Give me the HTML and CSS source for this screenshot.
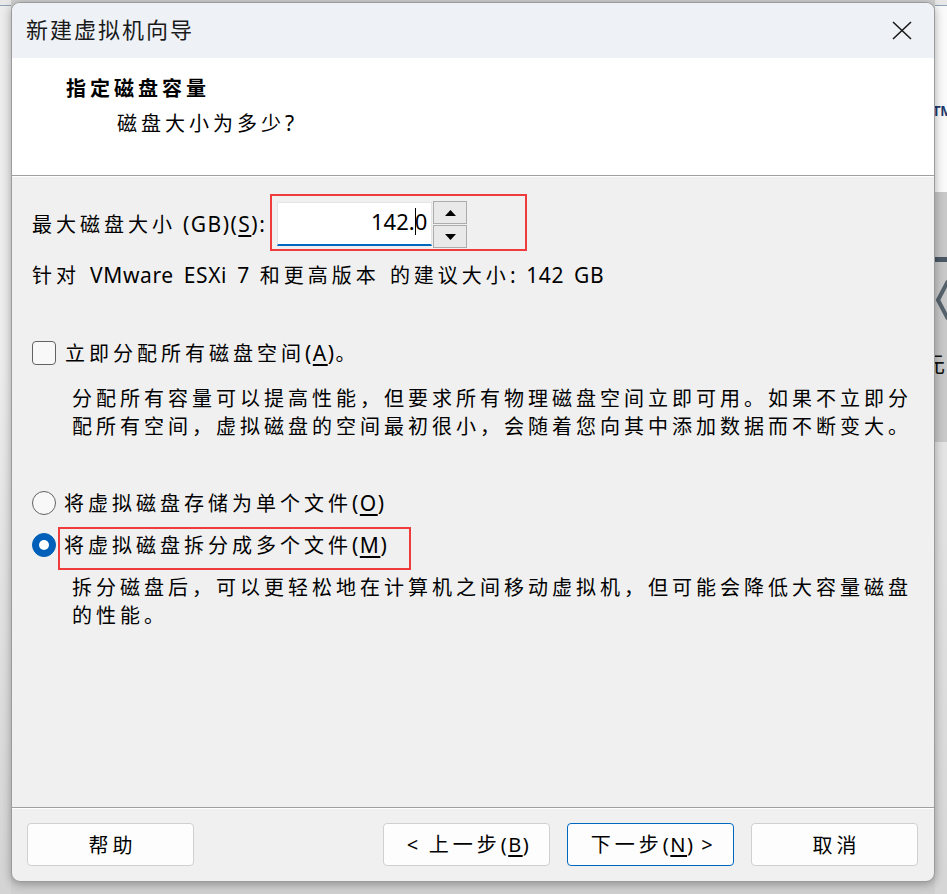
FILE: index.html
```html
<!DOCTYPE html>
<html lang="zh-CN">
<head>
<meta charset="utf-8">
<title>新建虚拟机向导</title>
<link rel="stylesheet" href="styles.css">
</head>
<body>
<div class="desk-left"></div>
<div class="dialog">
  <div class="titlebar">
    <span class="title">新建虚拟机向导</span>
    <svg class="close" viewBox="0 0 20 19" width="20" height="19"><path d="M1 1L19 18M19 1L1 18" stroke="#1b1b1b" stroke-width="1.6" fill="none"/></svg>
  </div>
  <div class="header">
    <div class="h-title">指定磁盘容量</div>
    <div class="h-sub">磁盘大小为多少<span class="en">?</span></div>
  </div>
  <div class="content">
    <div class="size-row">
      <span class="size-label">最大磁盘大小<span class="en wide"> (GB)(<u>S</u>):</span></span>
      <div class="mark-box">
        <div class="field">142.<span class="caret"></span>0</div>
        <div class="spin">
          <div class="spin-btn"><svg viewBox="0 0 11 6" width="11" height="6"><polygon points="0,6 5.5,0 11,6" fill="#000"/></svg></div>
          <div class="spin-btn"><svg viewBox="0 0 11 6" width="11" height="6"><polygon points="0,0 11,0 5.5,6" fill="#000"/></svg></div>
        </div>
      </div>
    </div>
    <p class="hint">针对<span class="en"> VMware ESXi 7 </span>和更高版本<span class="en"> </span>的建议大小<span class="en">: 142 GB</span></p>
    <div class="opt opt-check"><span class="checkbox"></span><span class="opt-label">立即分配所有磁盘空间<span class="en wide">(<u>A</u>)</span>。</span></div>
    <p class="desc">分配所有容量可以提高性能，但要求所有物理磁盘空间立即可用。如果不立即分<br>配所有空间，虚拟磁盘的空间最初很小，会随着您向其中添加数据而不断变大。</p>
    <div class="opt opt-radio1"><span class="radio"></span><span class="opt-label">将虚拟磁盘存储为单个文件<span class="en wide">(<u>O</u>)</span></span></div>
    <div class="opt opt-radio2"><span class="radio on"></span><span class="opt-label marked">将虚拟磁盘拆分成多个文件<span class="en wide">(<u>M</u>)</span><span class="mark"></span></span></div>
    <p class="desc desc2">拆分磁盘后，可以更轻松地在计算机之间移动虚拟机，但可能会降低大容量磁盘<br>的性能。</p>
  </div>
  <div class="footer">
    <button class="btn help">帮助</button>
    <button class="btn"><span class="en">&lt;&nbsp; </span>上一步<span class="en wide">(<u>B</u>)</span></button>
    <button class="btn primary">下一步<span class="en wide">(<u>N</u>) &gt;</span></button>
    <button class="btn">取消</button>
  </div>
</div>
<div class="desk-right">
  <div class="dr-top"></div>
  <div class="dr-line"></div>
  <div class="dr-white"><span class="tm">TM</span></div>
  <div class="dr-panel">
    <div class="dr-bar"></div>
    <svg class="dr-chev" viewBox="0 0 12 42" width="12" height="42"><path d="M13 2L3 21L13 40" stroke="#56626c" stroke-width="4" fill="none"/></svg>
    <span class="dr-char">元</span>
  </div>
  <div class="dr-rest"></div>
</div>
</body>
</html>
```

FILE: styles.css
```css
* { box-sizing: border-box; }
html, body { margin: 0; padding: 0; }
body {
  width: 947px;
  height: 894px;
  overflow: hidden;
  display: flex;
  align-items: flex-start;
  background: #cfcfcf;
  font-family: "Noto Sans CJK SC", sans-serif;
  color: #000;
}
.en { font-family: "Noto Sans", "Noto Sans CJK SC", sans-serif; letter-spacing: 0; font-size: 21px; }
.en.wide { letter-spacing: 1.5px; }
u { text-decoration-thickness: 1.5px; text-underline-offset: 3px; }

.desk-left {
  width: 11px;
  height: 894px;
  flex: none;
  background: linear-gradient(#e8e8e8 0 5px, #8fa3b9 5px 6px, #ececec 6px 40%, #d4d4d4);
}

.dialog {
  width: 924px;
  height: 880px;
  margin-top: 2px;
  flex: none;
  border: 1px solid #9b9b9b;
  border-radius: 9px;
  background: #f0f0f0;
  display: flex;
  flex-direction: column;
  box-shadow: 0 2px 10px rgba(0, 0, 0, 0.32);
  overflow: hidden;
  position: relative;
  z-index: 1;
}

.titlebar {
  height: 55px;
  flex: none;
  background: #eef2f7;
  display: flex;
  align-items: center;
  justify-content: space-between;
  padding: 0 22px 0 14px;
}
.title { font-size: 22px; letter-spacing: 2px; color: #1a1a1a; line-height: 28px; margin-bottom: 6px; }
.close { display: block; }

.header {
  height: 118px;
  flex: none;
  background: #fff;
  border-bottom: 1px solid #a0a0a0;
  padding: 16px 0 0 54px;
  font-size: 20px;
  letter-spacing: 4px;
  line-height: 28px;
}
.h-title { font-weight: 700; }
.h-sub { margin: 7px 0 0 51px; }

.content {
  flex: 1;
  border-top: 1px solid #fff;
  padding: 15px 20px 0 20px;
  font-size: 20px;
  letter-spacing: 4px;
  line-height: 28px;
}

.size-row { display: flex; align-items: flex-start; margin-top: 2px; }
.size-label { margin: 16px 4px 0 0; white-space: nowrap; }
.mark-box {
  display: flex;
  align-items: flex-start;
  gap: 1px;
  border: 2px solid #ef3b3b;
  padding: 5px 58px 1px 5px;
}
.field {
  width: 155px;
  height: 44px;
  margin-top: 1px;
  background: #fff;
  border: 1px solid #e4e4e4;
  border-bottom: 2px solid #0067c0;
  font-family: "Noto Sans", sans-serif;
  font-size: 22px;
  letter-spacing: 0;
  line-height: 36px;
  text-align: right;
  padding-right: 4px;
}
.caret {
  display: inline-block;
  width: 1px;
  height: 27px;
  background: #000;
  vertical-align: -5px;
  margin: 0 -1px 0 0;
}
.spin { display: flex; flex-direction: column; gap: 1px; width: 34px; }
.spin-btn {
  height: 23px;
  border: 1px solid #acacac;
  background: #e9e9e9;
  display: flex;
  align-items: center;
  justify-content: center;
}
.spin-btn svg { display: block; }

.hint { margin: 10px 0 0; white-space: nowrap; }
.hint .en { letter-spacing: 0.6px; word-spacing: 4px; }

.opt { display: flex; align-items: center; height: 28px; white-space: nowrap; }
.opt-check { margin-top: 50px; }
.opt-radio1 { margin-top: 49px; }
.opt-radio2 { margin-top: 14px; }
.checkbox {
  width: 24px;
  height: 24px;
  flex: none;
  border: 1.5px solid #626262;
  border-radius: 4px;
  background: #f8f8f8;
  margin-right: 9px;
}
.radio {
  width: 24px;
  height: 24px;
  flex: none;
  border: 1.5px solid #626262;
  border-radius: 50%;
  background: #f8f8f8;
  margin-right: 8px;
  display: flex;
  align-items: center;
  justify-content: center;
}
.radio.on { background: #005fb8; border-color: #005fb8; }
.radio.on::after {
  content: "";
  width: 10px;
  height: 10px;
  border-radius: 50%;
  background: #fff;
}
.marked { position: relative; }
.mark {
  position: absolute;
  left: -6px;
  top: -4px;
  width: 353px;
  height: 43px;
  border: 2px solid #ef3b3b;
}

.desc { margin: 17px 0 0 40px; white-space: nowrap; }
.desc2 { margin-top: 14px; }

.footer {
  height: 74px;
  flex: none;
  border-top: 1px solid #a0a0a0;
  box-shadow: inset 0 1px 0 #fff;
  padding: 15px 16px 0 15px;
  display: flex;
  align-items: flex-start;
  gap: 17px;
}
.btn {
  width: 167px;
  height: 43px;
  border: 1px solid #d0d0d0;
  border-radius: 4px;
  background: #fdfdfd;
  font-family: "Noto Sans CJK SC", sans-serif;
  font-size: 20px;
  letter-spacing: 4px;
  color: #000;
  padding: 0 0 0 4px;
  line-height: 28px;
}
.btn .en { font-size: 20px; }
.btn.help { margin-right: auto; }
.btn.primary { border-color: #0067c0; }

.desk-right {
  width: 12px;
  height: 894px;
  flex: none;
  display: flex;
  flex-direction: column;
  overflow: hidden;
}
.dr-top { height: 5px; background: #e8e8e8; }
.dr-line { height: 1px; background: #8fa3b9; }
.dr-white { height: 186px; background: #fafafa; padding-top: 97px; overflow: hidden; }
.tm {
  display: block;
  margin-left: -3px;
  font-family: "Liberation Sans", sans-serif;
  font-weight: 700;
  font-size: 14px;
  line-height: 16px;
  color: #1f3a6b;
  letter-spacing: 0;
  white-space: nowrap;
}
.dr-panel {
  height: 250px;
  background: #c8c8c8;
  padding-top: 65px;
  display: flex;
  flex-direction: column;
  overflow: hidden;
}
.dr-bar { height: 5px; background: #4b5864; }
.dr-chev { display: block; margin-top: 17px; }
.dr-char {
  display: block;
  margin: 28px 0 0 -12px;
  font-size: 22px;
  line-height: 26px;
  color: #111;
}
.dr-rest { flex: 1; background: linear-gradient(#e4e4e4, #d6d6d6); }
```
